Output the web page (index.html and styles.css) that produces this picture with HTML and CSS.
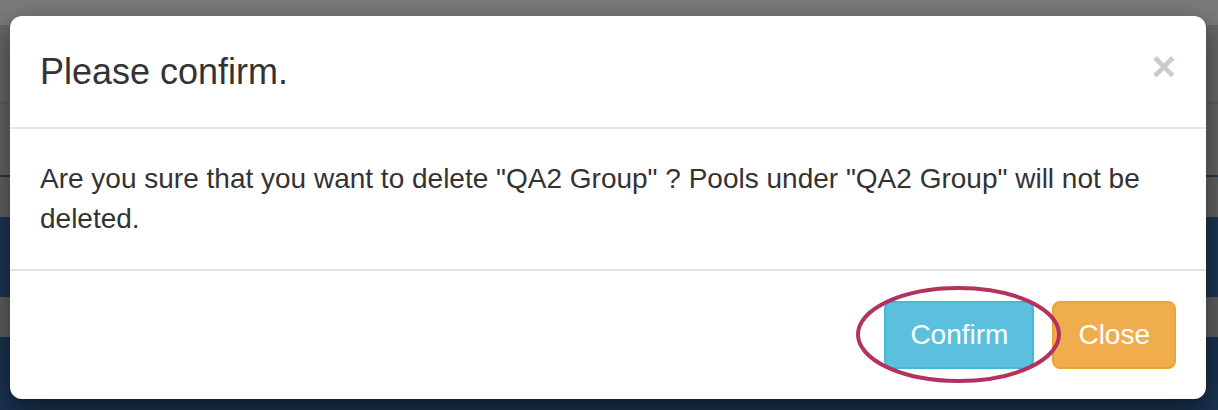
FILE: index.html
```html
<!DOCTYPE html>
<html>
<head>
<meta charset="utf-8">
<link rel="stylesheet" href="styles.css">
</head>
<body>
<div class="page">
  <div class="band band-top"></div>
  <div class="band band-nav"></div>
  <div class="band band-navline"></div>
  <div class="band band-sub"></div>
  <div class="band band-blueline"></div>
  <div class="band band-row1"></div>
  <div class="band band-blue1"></div>
  <div class="band band-row2"></div>
  <div class="band band-blue2"></div>
</div>
<div class="modal">
  <div class="modal-header">
    <h4 class="modal-title">Please confirm.</h4>
    <button class="close" type="button">×</button>
  </div>
  <div class="modal-body">
    Are you sure that you want to delete "QA2 Group" ? Pools under "QA2 Group" will not be deleted.
  </div>
  <div class="modal-footer">
    <button class="btn btn-info" type="button">Confirm</button>
    <button class="btn btn-warning" type="button">Close</button>
  </div>
  <svg class="annot" width="220" height="110" viewBox="0 0 220 110">
    <ellipse cx="108.5" cy="54.5" rx="100.5" ry="46.5" fill="none" stroke="#b4325e" stroke-width="4"/>
  </svg>
</div>
</body>
</html>
```
FILE: styles.css
```css
html, body {
  margin: 0;
  padding: 0;
}
body {
  width: 1218px;
  height: 410px;
  overflow: hidden;
  position: relative;
  font-family: "Liberation Sans", Arial, sans-serif;
  color: #333;
}
.page {
  display: flex;
  flex-direction: column;
  height: 410px;
}
.band { flex: none; }
.band-top { height: 25px; background: #7b7b7b; }
.band-nav { height: 76px; background: #686868; }
.band-navline { height: 3px; background: #5f5f5f; }
.band-sub { height: 71px; background: #666666; }
.band-blueline { height: 2px; background: #1d3a56; }
.band-row1 { height: 40px; background: #626262; }
.band-blue1 { height: 80px; background: #1c3652; }
.band-row2 { height: 40px; background: #5f5f5f; }
.band-blue2 { height: 73px; background: #1a3350; }

.modal {
  position: absolute;
  left: 10px;
  top: 16px;
  width: 1196px;
  background: #fff;
  border-radius: 12px;
  box-shadow: 0 10px 30px rgba(0, 0, 0, 0.5);
}
.modal-header {
  padding: 30px;
  border-bottom: 2px solid #e5e5e5;
  display: flex;
  align-items: flex-start;
}
.modal-title {
  margin: 0;
  flex: 1;
  font-size: 36px;
  font-weight: normal;
  line-height: 1.42857;
  color: #333;
}
.close {
  border: 0;
  background: transparent;
  padding: 0;
  margin-top: 0px;
  font-family: "Liberation Sans", Arial, sans-serif;
  font-size: 42px;
  font-weight: bold;
  line-height: 1;
  color: #000;
  opacity: 0.2;
  cursor: pointer;
}
.modal-body {
  padding: 30px;
  font-size: 28px;
  line-height: 40px;
}
.modal-footer {
  padding: 30px;
  border-top: 2px solid #e5e5e5;
  display: flex;
  justify-content: flex-end;
  gap: 18px;
}
.btn {
  font-family: "Liberation Sans", Arial, sans-serif;
  font-size: 28px;
  line-height: 40px;
  padding: 12px 24px;
  border-radius: 8px;
  border: 2px solid transparent;
  color: #fff;
  cursor: pointer;
}
.btn-info {
  background: #5bc0de;
  border-color: #46b8da;
}
.btn-warning {
  background: #f0ad4e;
  border-color: #eea236;
}
.annot {
  position: absolute;
  left: 840px;
  top: 264px;
}
```
